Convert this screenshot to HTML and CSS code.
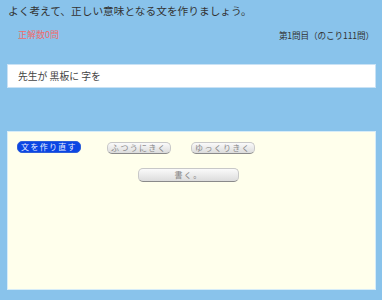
FILE: index.html
```html
<!DOCTYPE html>
<html lang="ja">
<head>
    <meta charset="UTF-8">
    <title>文を作ろう</title>
    <link rel="stylesheet" href="styles.css">
</head>
<body>
    <h1 class="lead">よく考えて、正しい意味となる文を作りましょう。</h1>
    <div class="status">
        <span class="score">正解数0問</span>
        <span class="count">第1問目（のこり111問）</span>
    </div>
    <div class="answer">先生が 黒板に 字を</div>
    <div class="panel">
        <div class="row">
            <button class="btn btn-blue">文を作り直す</button>
            <button class="btn btn-gray">ふつうにきく</button>
            <button class="btn btn-gray">ゆっくりきく</button>
        </div>
        <div class="row center">
            <button class="btn btn-gray btn-wide">書く。</button>
        </div>
    </div>
</body>
</html>
```

FILE: styles.css
```css
body {
    margin: 0;
    padding: 3px 6px 0 7px;
    background-color: #89c3eb;
    font-family: "Noto Sans CJK JP", sans-serif;
    color: #333;
}
.lead {
    font-size: 10.7px;
    font-weight: normal;
    margin: 0 0 0 1px;
    line-height: 16px;
}
.status {
    display: flex;
    justify-content: space-between;
    font-size: 9px;
    line-height: 12px;
    padding: 10px 2px 0 11px;
    height: 33px;
    box-sizing: border-box;
}
.score {
    color: #f26b6b;
}
.count {
    color: #333;
    font-size: 8.6px;
    letter-spacing: -0.1px;
}
.answer {
    background-color: #fff;
    border: 1px solid #c9e2f5;
    height: 24px;
    box-sizing: border-box;
    margin-top: 12px;
    padding: 4px 10px;
    font-size: 9.8px;
    line-height: 14px;
    color: #444;
}
.panel {
    background-color: #ffffec;
    border: 1px solid #d6ecf8;
    margin-top: 43px;
    height: 159px;
    box-sizing: border-box;
    padding: 9px 9px;
}
.row {
    display: flex;
}
.row.center {
    justify-content: center;
    margin-top: 13px;
    padding-right: 6px;
}
.btn {
    font-family: "Noto Sans CJK JP", sans-serif;
    font-size: 8px;
    letter-spacing: 1.3px;
    line-height: 10px;
    height: 12px;
    width: 64px;
    padding: 0;
    border-radius: 5px;
    cursor: pointer;
}
.btn-blue {
    background-color: #0b46e4;
    color: #e8eeff;
    border: 1px solid #2f5fd8;
    margin-right: 26px;
}
.btn-gray {
    margin-top: 1px;
    color: #888;
    background: linear-gradient(#fafafa, #dcdcdc);
    border: 1px solid #c8c8c8;
    border-bottom: 1px solid #8a8a8a;
    margin-right: 20px;
}
.btn-wide {
    width: 101px;
    height: 14px;
    margin-right: 0;
}
```
